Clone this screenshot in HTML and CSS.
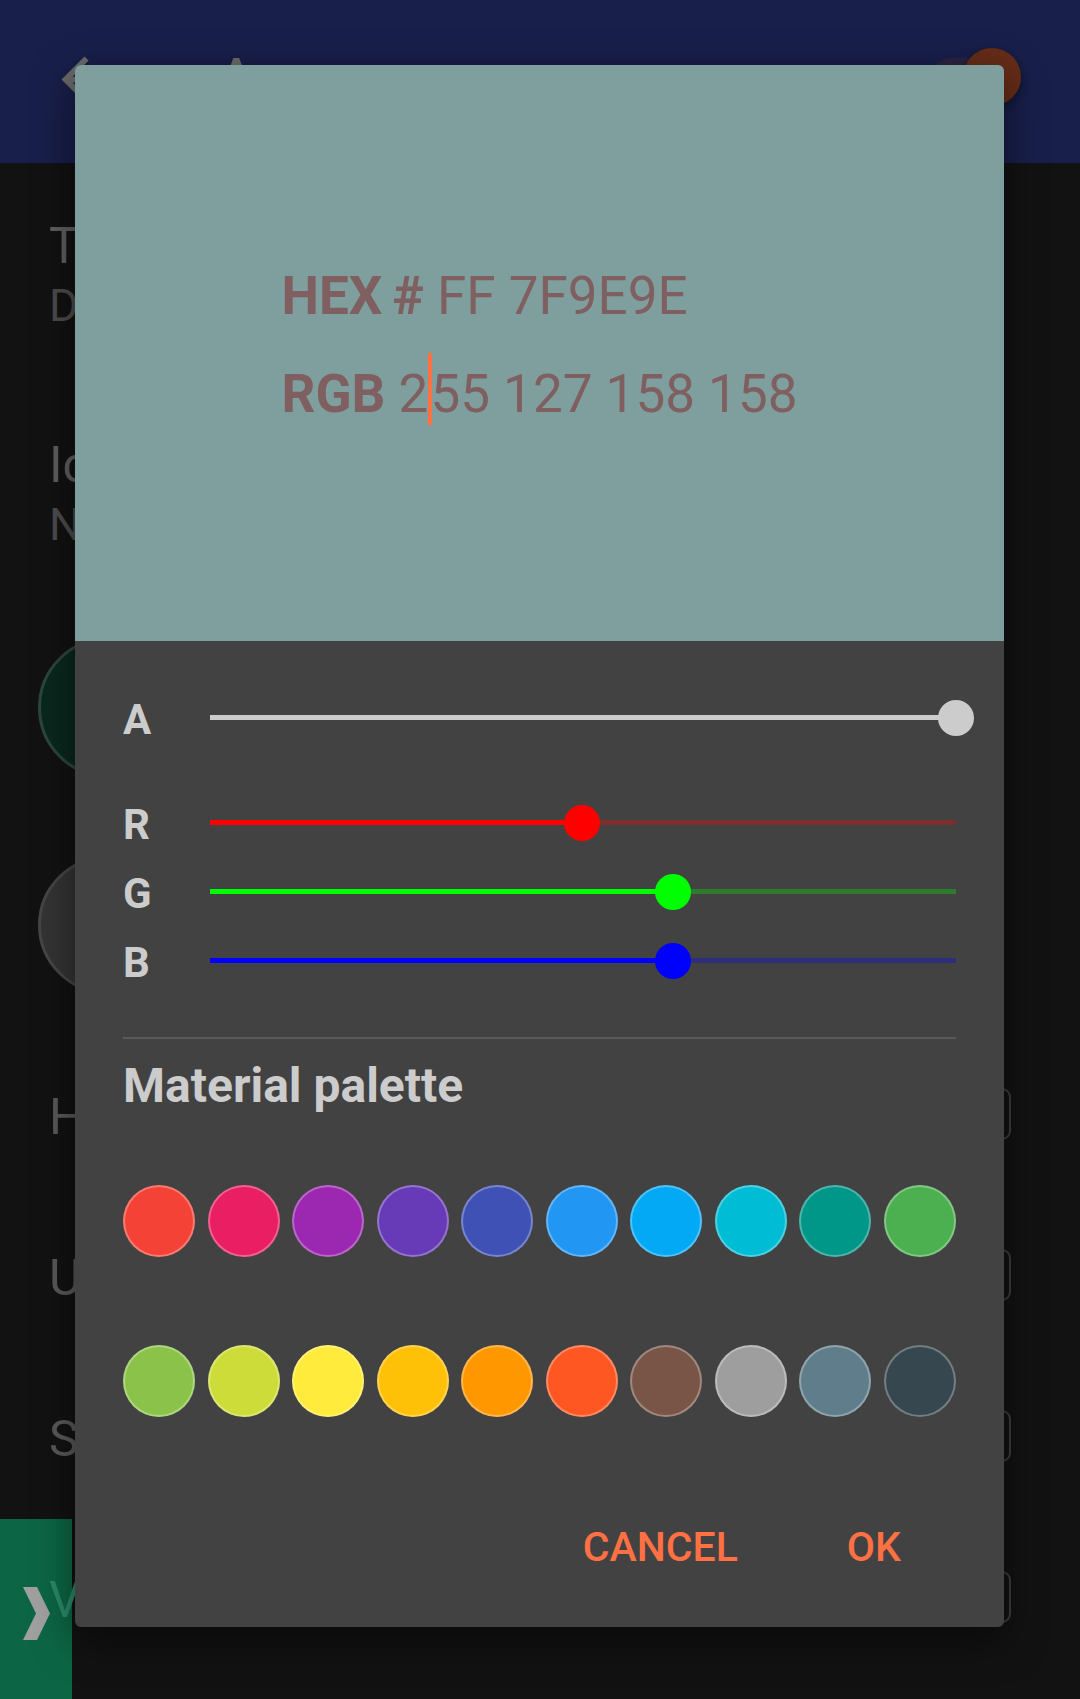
FILE: index.html
```html
<!DOCTYPE html>
<html lang="en">
<head>
<meta charset="utf-8">
<title>Color picker</title>
<link rel="stylesheet" href="styles.css">
</head>
<body>
<div class="app">
  <header class="appbar">
    <svg class="back" viewBox="0 0 24 24"><path d="M20 11H7.83l5.59-5.59L12 4l-8 8 8 8 1.41-1.41L7.83 13H20v-2z"/></svg>
    <h1 class="title">Appearance</h1>
    <div class="switch"><span class="switch-thumb"></span></div>
  </header>
  <div class="drawer-handle">
    <svg class="chevron" viewBox="0 0 27 53"><polygon points="0,0 14,0 27,26.5 14,53 0,53 13,26.5"/></svg>
  </div>
  <main class="settings">
    <div class="item item-first">
      <div class="item-title">Theme</div>
      <div class="item-sub">Dark</div>
    </div>
    <div class="item item-second">
      <div class="item-title">Icon color</div>
      <div class="item-sub">None</div>
    </div>
    <div class="swatch swatch-green"></div>
    <div class="swatch swatch-grey"></div>
    <div class="field-row field-row-first"><span class="field-label">Header</span><span class="field"></span></div>
    <div class="field-row"><span class="field-label">Unread</span><span class="field"></span></div>
    <div class="field-row"><span class="field-label">Selected</span><span class="field"></span></div>
    <div class="field-row"><span class="field-label field-accent">Visited</span><span class="field"></span></div>
  </main>
</div>

<div class="dialog">
  <div class="preview">
    <div class="codes">
      <div class="code-line"><b>HEX</b><b class="hash">#</b> FF 7F9E9E</div>
      <div class="code-line"><b>RGB</b> 2<span class="caret"></span>55 127 158 158</div>
    </div>
  </div>
  <div class="panel">
    <div class="slider slider-a">
      <span class="slider-label">A</span>
      <div class="track track-a"><div class="fill" style="width:100%"></div><span class="thumb" style="left:100%"></span></div>
    </div>
    <div class="slider">
      <span class="slider-label">R</span>
      <div class="track track-r"><div class="fill" style="width:49.8%"></div><span class="thumb" style="left:49.8%"></span></div>
    </div>
    <div class="slider">
      <span class="slider-label">G</span>
      <div class="track track-g"><div class="fill" style="width:62%"></div><span class="thumb" style="left:62%"></span></div>
    </div>
    <div class="slider">
      <span class="slider-label">B</span>
      <div class="track track-b"><div class="fill" style="width:62%"></div><span class="thumb" style="left:62%"></span></div>
    </div>
    <div class="divider"></div>
    <div class="palette-title">Material palette</div>
    <div class="palette-row palette-row-first">
      <span class="dot c-red"></span><span class="dot c-pink"></span><span class="dot c-purple"></span><span class="dot c-deeppurple"></span><span class="dot c-indigo"></span><span class="dot c-blue"></span><span class="dot c-lightblue"></span><span class="dot c-cyan"></span><span class="dot c-teal"></span><span class="dot c-green"></span>
    </div>
    <div class="palette-row">
      <span class="dot c-lightgreen"></span><span class="dot c-lime"></span><span class="dot c-yellow"></span><span class="dot c-amber"></span><span class="dot c-orange"></span><span class="dot c-deeporange"></span><span class="dot c-brown"></span><span class="dot c-grey"></span><span class="dot c-bluegrey"></span><span class="dot c-dark"></span>
    </div>
    <div class="actions">
      <span class="btn">CANCEL</span>
      <span class="btn">OK</span>
    </div>
  </div>
</div>
</body>
</html>
```
FILE: styles.css
```css
* { box-sizing: border-box; }
html, body {
  margin: 0;
  padding: 0;
}
body {
  width: 1080px;
  height: 1699px;
  overflow: hidden;
  background: #121212;
  font-family: Roboto, "Liberation Sans", sans-serif;
  position: relative;
}
.app {
  position: relative;
  z-index: 0;
  height: 1699px;
}
.appbar {
  height: 163px;
  background: #181f4a;
  display: flex;
  align-items: center;
}
.back {
  width: 69px;
  height: 69px;
  margin-left: 50px;
  margin-bottom: 5px;
  fill: #6b6b6b;
  flex: none;
}
.title {
  margin: 0 0 8px 100px;
  font-size: 52px;
  line-height: 61px;
  font-weight: 500;
  color: #6b6b6b;
  white-space: nowrap;
}
.switch {
  margin-left: auto;
  margin-right: 70px;
  margin-bottom: 9px;
  width: 78px;
  height: 38px;
  border-radius: 19px;
  background: #2d2342;
  position: relative;
  flex: none;
}
.switch-thumb {
  position: absolute;
  left: 31px;
  top: -10px;
  width: 58px;
  height: 58px;
  border-radius: 50%;
  background: #662c18;
  box-shadow: 0 3px 8px rgba(0,0,0,0.45);
}
.settings {
  position: relative;
  z-index: 1;
  padding: 0 69px 0 49px;
}
.item-title {
  font-size: 50px;
  line-height: 58px;
  color: #5f5f5f;
  white-space: nowrap;
}
.item-sub {
  font-size: 45px;
  line-height: 62px;
  color: #4c4c4c;
  white-space: nowrap;
}
.item-first { margin-top: 54px; }
.item-second { margin-top: 99px; }
.swatch {
  border-radius: 50%;
  margin-left: -11px;
}
.swatch-green {
  margin-top: 81px;
  width: 141px;
  height: 141px;
  background: #0a281e;
  border: 3px solid #2d463c;
}
.swatch-grey {
  margin-top: 78px;
  width: 138px;
  height: 138px;
  background: #343434;
  border: 3px solid #464646;
}
.field-row {
  display: flex;
  justify-content: space-between;
  align-items: flex-start;
  height: 52px;
  margin-top: 109px;
}
.field-row-first { margin-top: 94px; }
.field-label {
  font-size: 50px;
  line-height: 52px;
  padding-top: 3px;
  color: #5a5a5a;
  white-space: nowrap;
}
.field-accent { color: #2a8a6a; }
.field {
  width: 220px;
  height: 52px;
  border: 2px solid #3e3e3e;
  border-radius: 9px;
}
.drawer-handle {
  position: absolute;
  left: 0;
  bottom: 0;
  width: 72px;
  height: 180px;
  background: #0c6646;
  padding: 68px 0 0 23px;
}
.chevron {
  display: block;
  width: 27px;
  height: 53px;
  fill: #a0a0a0;
}

/* dialog */
.dialog {
  position: absolute;
  z-index: 10;
  left: 75px;
  top: 65px;
  width: 929px;
  border-radius: 6px;
  overflow: hidden;
  background: #424242;
  box-shadow: 0 12px 40px rgba(0,0,0,0.5);
}
.preview {
  height: 576px;
  background: #7f9e9e;
  display: flex;
  flex-direction: column;
  align-items: center;
  padding-top: 182px;
}
.codes {
  font-size: 53px;
  line-height: 98px;
  color: #7f5f5f;
  white-space: nowrap;
}
.codes b { font-weight: 700; }
.hash { margin-left: 10px; }
.caret {
  display: inline-block;
  width: 4px;
  height: 72px;
  margin-right: -2px;
  vertical-align: -13px;
  background: #ff7043;
}
.panel {
  padding: 42px 48px 56px;
}
.slider {
  display: flex;
  align-items: center;
  height: 69px;
}
.slider-a { margin-bottom: 36px; }
.slider-label {
  width: 87px;
  flex: none;
  font-size: 42px;
  font-weight: 700;
  line-height: 64px;
  padding-top: 5px;
  color: #cccccc;
}
.track {
  flex: 1;
  height: 5px;
  position: relative;
}
.fill { height: 100%; }
.thumb {
  position: absolute;
  top: 50%;
  width: 36px;
  height: 36px;
  margin: -18px 0 0 -18px;
  border-radius: 50%;
}
.track-a { background: #cccccc; }
.track-a .fill, .track-a .thumb { background: #cccccc; }
.track-r { background: rgba(255,0,0,0.3); }
.track-r .fill, .track-r .thumb { background: #ff0000; }
.track-g { background: rgba(0,255,0,0.3); }
.track-g .fill, .track-g .thumb { background: #00ff00; }
.track-b { background: rgba(0,0,255,0.3); }
.track-b .fill, .track-b .thumb { background: #0000ff; }
.divider {
  margin-top: 42px;
  height: 2px;
  background: #595959;
}
.palette-title {
  margin-top: 19px;
  font-size: 48px;
  font-weight: 700;
  line-height: 56px;
  color: #cccccc;
}
.palette-row {
  display: flex;
  justify-content: space-between;
  margin-top: 88px;
}
.palette-row-first { margin-top: 71px; }
.dot {
  width: 72px;
  height: 72px;
  border-radius: 50%;
  box-shadow: inset 0 0 0 2px rgba(255,255,255,0.3);
}
.c-red { background: #f44336; }
.c-pink { background: #e91e63; }
.c-purple { background: #9c27b0; }
.c-deeppurple { background: #673ab7; }
.c-indigo { background: #3f51b5; }
.c-blue { background: #2196f3; }
.c-lightblue { background: #03a9f4; }
.c-cyan { background: #00bcd4; }
.c-teal { background: #009688; }
.c-green { background: #4caf50; }
.c-lightgreen { background: #8bc34a; }
.c-lime { background: #cddc39; }
.c-yellow { background: #ffeb3b; }
.c-amber { background: #ffc107; }
.c-orange { background: #ff9800; }
.c-deeporange { background: #ff5722; }
.c-brown { background: #795548; }
.c-grey { background: #9e9e9e; }
.c-bluegrey { background: #607d8b; }
.c-dark { background: #37474f; }
.actions {
  margin-top: 106px;
  display: flex;
  justify-content: flex-end;
  gap: 109px;
  padding-right: 55px;
}
.btn {
  font-size: 41px;
  font-weight: 500;
  line-height: 48px;
  color: #ff7043;
}
```
